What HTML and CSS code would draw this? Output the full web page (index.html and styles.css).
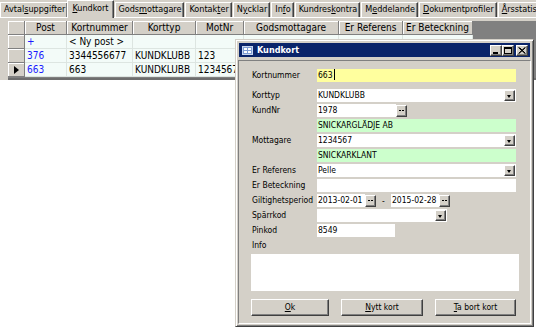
FILE: index.html
```html
<!DOCTYPE html>
<html lang="sv">

<head>
    <meta charset="UTF-8">
    <title>Kundkort</title>
    <link rel="stylesheet" href="styles.css">
</head>

<body>
    <div class="tabs">
        <div class="tab">Avtal<u>s</u>uppgifter</div>
        <div class="tab active"><u>K</u>undkort</div>
        <div class="tab">Gods<u>m</u>ottagare</div>
        <div class="tab">Kontak<u>t</u>er</div>
        <div class="tab">N<u>y</u>cklar</div>
        <div class="tab">In<u>f</u>o</div>
        <div class="tab">Kundres<u>k</u>ontra</div>
        <div class="tab">M<u>e</u>ddelande</div>
        <div class="tab"><u>D</u>okumentprofiler</div>
        <div class="tab"><u>Å</u>rsstatistik</div>
    </div>

    <div class="page">
        <div class="grid">
            <div class="grid-row head">
                <div class="sel"></div>
                <div class="hc">Post</div>
                <div class="hc">Kortnummer</div>
                <div class="hc">Korttyp</div>
                <div class="hc">MotNr</div>
                <div class="hc">Godsmottagare</div>
                <div class="hc">Er Referens</div>
                <div class="hc">Er Beteckning</div>
            </div>
            <div class="grid-row">
                <div class="sel"></div>
                <div class="c blue">+</div>
                <div class="c">&lt; Ny post &gt;</div>
                <div class="c"></div>
                <div class="c"></div>
                <div class="c"></div>
                <div class="c"></div>
                <div class="c"></div>
            </div>
            <div class="grid-row">
                <div class="sel"></div>
                <div class="c blue">376</div>
                <div class="c">3344556677</div>
                <div class="c">KUNDKLUBB</div>
                <div class="c">123</div>
                <div class="c"></div>
                <div class="c"></div>
                <div class="c"></div>
            </div>
            <div class="grid-row">
                <div class="sel current"></div>
                <div class="c blue">663</div>
                <div class="c">663</div>
                <div class="c">KUNDKLUBB</div>
                <div class="c">1234567</div>
                <div class="c"></div>
                <div class="c"></div>
                <div class="c"></div>
            </div>
        </div>
    </div>

    <div class="dialog">
        <div class="titlebar">
            <svg class="ticon" width="11" height="9" viewBox="0 0 11 9">
                <rect x="0.5" y="0.5" width="10" height="8" fill="#7f9dd4" stroke="#c8d6f0" />
                <rect x="2" y="2" width="3" height="2" fill="#fff" />
                <rect x="6" y="2" width="3" height="2" fill="#fff" />
                <rect x="2" y="5" width="3" height="2" fill="#fff" />
                <rect x="6" y="5" width="3" height="2" fill="#fff" />
            </svg>
            <span class="title">Kundkort</span>
            <div class="tbtns">
                <span class="tb"><svg width="8" height="7" viewBox="0 0 8 7"><rect x="1" y="5" width="5" height="2" fill="#000" /></svg></span>
                <span class="tb"><svg width="8" height="7" viewBox="0 0 8 7"><rect x="0.5" y="0.5" width="7" height="6" fill="none" stroke="#000" /><rect x="0" y="0" width="8" height="2" fill="#000" /></svg></span>
                <span class="tb close"><svg width="8" height="7" viewBox="0 0 8 7"><path d="M0.5 0.5 L7 6.5 M1.5 0.5 L7.5 6.5 M7 0.5 L0.5 6.5 M7.5 0.5 L1 6.5" stroke="#000" stroke-width="1" /></svg></span>
            </div>
        </div>

        <div class="panel">
            <div class="form">
                <div class="lbl">Kortnummer</div>
                <div class="field yellow">663<span class="caret"></span></div>

                <div class="lbl">Korttyp</div>
                <div class="field select">KUNDKLUBB<span class="dd"></span></div>

                <div class="lbl">KundNr</div>
                <div class="combo">
                    <div class="field kundnr">1978</div>
                    <span class="dots"></span>
                </div>

                <div></div>
                <div class="field green">SNICKARGLÄDJE AB</div>

                <div class="lbl">Mottagare</div>
                <div class="field select">1234567<span class="dd"></span></div>

                <div></div>
                <div class="field green">SNICKARKLANT</div>

                <div class="lbl">Er Referens</div>
                <div class="field select">Pelle<span class="dd"></span></div>

                <div class="lbl">Er Beteckning</div>
                <div class="field"></div>

                <div class="lbl">Giltighetsperiod</div>
                <div class="combo">
                    <div class="field date">2013-02-01</div>
                    <span class="dots"></span>
                    <span class="dash">-</span>
                    <div class="field date">2015-02-28</div>
                    <span class="dots"></span>
                </div>

                <div class="lbl">Spärrkod</div>
                <div class="field select sparr"><span class="dd"></span></div>

                <div class="lbl">Pinkod</div>
                <div class="field pinkod">8549</div>
            </div>

            <div class="info-label">Info</div>
            <div class="info"></div>

            <div class="buttons">
                <div class="button"><u>O</u>k</div>
                <div class="button"><u>N</u>ytt kort</div>
                <div class="button"><u>T</u>a bort kort</div>
            </div>
        </div>
    </div>
</body>

</html>
```

FILE: styles.css
```css
body {
    margin: 0;
    width: 536px;
    height: 329px;
    overflow: hidden;
    position: relative;
    background: #ffffff;
    font-family: "DejaVu Sans Condensed", "DejaVu Sans", sans-serif;
    font-stretch: condensed;
    color: #000;
}

/* tab strip */
.tabs {
    display: flex;
    align-items: flex-end;
    height: 17px;
    background: #d4d0c8;
}

.tab {
    box-sizing: border-box;
    height: 15px;
    padding: 0 2px 0 3px;
    margin-right: 1px;
    font-size: 9px;
    line-height: 13px;
    white-space: nowrap;
    border-top: 1px solid #fff;
    border-left: 1px solid #fff;
    border-right: 1px solid #404040;
    box-shadow: inset -1px 0 #808080;
    background: #d4d0c8;
}

.tab.active {
    position: relative;
    z-index: 1;
    height: 18px;
    margin: 0 -1px -1px -2px;
    padding: 1px 4px 0 4px;
}

.tab + .tab.active + .tab {
    margin-left: 2px;
}

/* tab page with grid */
.page {
    height: 59px;
    padding: 3px 0 0 8px;
    border-top: 1px solid #fff;
    background: #d4d0c8;
}

.grid {
    height: 57px;
    background: #808080;
    border-bottom: 2px solid #6e6e6e;
    font-size: 10px;
}

.grid-row {
    display: grid;
    grid-template-columns: 17px 42px 66px 63px 48px 95px 64px 70px;
    height: 14px;
    width: 465px;
}

.sel,
.hc {
    box-sizing: border-box;
    background: #d4d0c8;
    border-right: 1px solid #808080;
    border-bottom: 1px solid #808080;
    box-shadow: inset 1px 1px #fff;
}

.hc {
    text-align: center;
    line-height: 13px;
    white-space: nowrap;
    overflow: hidden;
}

.sel.current {
    position: relative;
}

.sel.current::after {
    content: "";
    position: absolute;
    left: 6px;
    top: 3px;
    border-left: 5px solid #000;
    border-top: 4px solid transparent;
    border-bottom: 4px solid transparent;
}

.c {
    box-sizing: border-box;
    background: #f3fbf8;
    border-right: 1px solid #dde5e1;
    border-bottom: 1px solid #dde5e1;
    padding-left: 2px;
    line-height: 14px;
    white-space: nowrap;
    overflow: hidden;
}

.blue {
    color: #1a1aff;
}

/* dialog window */
.dialog {
    position: absolute;
    left: 235px;
    top: 39px;
    width: 299px;
    height: 288px;
    box-sizing: border-box;
    padding: 2px;
    background: #d4d0c8;
    border: 1px solid;
    border-color: #d4d0c8 #404040 #404040 #d4d0c8;
    box-shadow: inset 1px 1px #fff, inset -1px -1px #808080;
}

.titlebar {
    display: flex;
    align-items: center;
    height: 14px;
    margin: 1px 1px 0 1px;
    background: #0a246a;
    color: #fff;
}

.ticon {
    margin: 0 4px 0 3px;
}

.title {
    font-weight: bold;
    font-size: 9px;
}

.tbtns {
    display: flex;
    margin-left: auto;
    margin-right: 2px;
}

.tb {
    display: flex;
    align-items: center;
    justify-content: center;
    box-sizing: border-box;
    width: 12px;
    height: 11px;
    background: #d4d0c8;
    border: 1px solid;
    border-color: #fff #404040 #404040 #fff;
    box-shadow: inset -1px -1px #808080;
}

.tb.close {
    margin-left: 2px;
}

.panel {
    box-sizing: border-box;
    height: 264px;
    margin-top: 3px;
    padding: 8px 11px 0 12px;
    border: 1px solid;
    border-color: #808080 #fff #fff #808080;
    font-size: 8.5px;
}

.form {
    display: grid;
    grid-template-columns: 66px 199px;
    grid-template-rows: 18px;
    grid-auto-rows: 13px;
    row-gap: 2px;
    align-items: start;
}

.lbl {
    padding-left: 1px;
    line-height: 13px;
    white-space: nowrap;
}

.field {
    box-sizing: border-box;
    height: 13px;
    padding-left: 1px;
    line-height: 13px;
    background: #fff;
    white-space: nowrap;
    position: relative;
}

.yellow {
    background: #ffff9e;
}

.green {
    background: #ccffcc;
}

.caret {
    display: inline-block;
    width: 1px;
    height: 11px;
    margin-left: 1px;
    vertical-align: -2px;
    background: #000;
}

.dd {
    position: absolute;
    right: 1px;
    top: 1px;
    box-sizing: border-box;
    width: 11px;
    height: 11px;
    background: #d4d0c8;
    border: 1px solid;
    border-color: #fff #404040 #404040 #fff;
    box-shadow: inset -1px -1px #808080;
}

.dd::after {
    content: "";
    position: absolute;
    left: 2px;
    top: 4px;
    border-top: 3px solid #000;
    border-left: 2.5px solid transparent;
    border-right: 2.5px solid transparent;
}

.combo {
    display: flex;
    align-items: center;
}

.kundnr {
    width: 79px;
}

.date {
    width: 48px;
}

.sparr {
    width: 130px;
}

.pinkod {
    width: 78px;
}

/* small "..." button: two dots */
.dots {
    position: relative;
    box-sizing: border-box;
    width: 11px;
    height: 12px;
    background: #d4d0c8;
    border: 1px solid;
    border-color: #fff #404040 #404040 #fff;
    box-shadow: inset -1px -1px #808080;
}

.dots::after {
    content: "";
    position: absolute;
    left: 2px;
    top: 4px;
    width: 2px;
    height: 1px;
    background: #000;
    box-shadow: 3px 0 #000;
}

.dash {
    width: 15px;
    text-align: center;
}

.info-label {
    height: 13px;
    line-height: 13px;
    margin-top: 2px;
    padding-left: 1px;
}

.info {
    height: 37px;
    margin-top: 2px;
    background: #fff;
}

.buttons {
    display: grid;
    grid-template-columns: 78px 82px 81px;
    column-gap: 12px;
    margin-top: 8px;
}

.button {
    box-sizing: border-box;
    height: 17px;
    line-height: 15px;
    text-align: center;
    background: #d4d0c8;
    border: 1px solid;
    border-color: #fff #404040 #404040 #fff;
    box-shadow: inset -1px -1px #808080;
}
```
